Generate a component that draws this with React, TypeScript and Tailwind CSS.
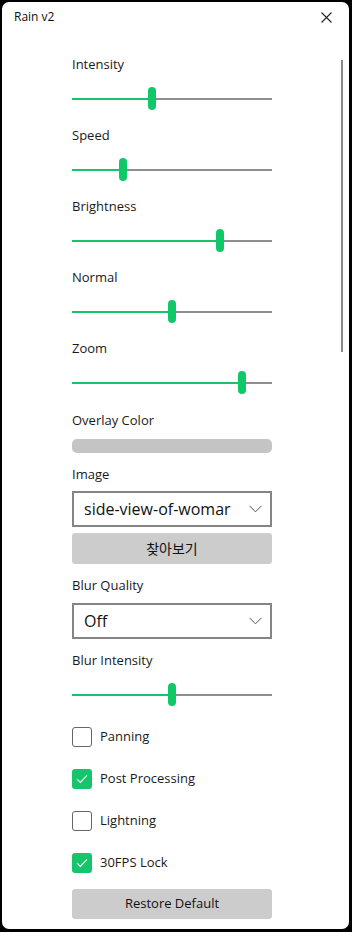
import React from "react";

const font = { fontFamily: '"Open Sans", "Noto Sans CJK KR", sans-serif' };

function Label({ text, className = "" }: { text: string; className?: string }) {
  return (
    <div className={"h-5 leading-5 text-[13px] text-[#1a1a1a] " + className}>{text}</div>
  );
}

function Slider({ pos, className = "" }: { pos: number; className?: string }) {
  return (
    <div className={"relative h-6 w-[200px] " + className}>
      <div className="absolute left-0 right-0 top-[11px] h-[2px] bg-[#8e8e8e]" />
      <div className="absolute left-0 top-[11px] h-[2px] bg-[#19c36c]" style={{ width: pos }} />
      <div
        className="absolute top-0 h-[23px] w-2 rounded-full bg-[#10c868]"
        style={{ left: pos - 4 }}
      />
    </div>
  );
}

function Chevron() {
  return (
    <svg width="13" height="8" viewBox="0 0 13 8" className="shrink-0">
      <path d="M0.5 0.8 L6.5 6.8 L12.5 0.8" fill="none" stroke="#555" strokeWidth="1" />
    </svg>
  );
}

function Select({ value, className = "" }: { value: string; className?: string }) {
  return (
    <div
      className={
        "flex h-9 w-[200px] items-center border-2 border-[#858585] bg-white pl-[10px] pr-[8px] " +
        className
      }
    >
      <div className="flex-1 overflow-hidden whitespace-nowrap text-[16px] text-[#111]">{value}</div>
      <Chevron />
    </div>
  );
}

function Checkbox({ checked, label, className = "" }: { checked: boolean; label: string; className?: string }) {
  return (
    <div className={"flex h-5 items-center gap-[8px] " + className}>
      {checked ? (
        <div className="flex h-5 w-5 items-center justify-center rounded-[3px] bg-[#16c46c]">
          <svg width="12" height="10" viewBox="0 0 12 10">
            <path d="M1 5.2 L4.3 8.4 L11 1.4" fill="none" stroke="#fff" strokeWidth="1.1" />
          </svg>
        </div>
      ) : (
        <div className="h-5 w-5 rounded-[3px] border border-[#666] bg-white" />
      )}
      <span className="text-[13px] text-[#1a1a1a]">{label}</span>
    </div>
  );
}

export default function App() {
  return (
    <div className="h-[932px] w-[352px] bg-black pl-[2px] pt-[2px]" style={font}>
      <div className="relative h-[927px] w-[347px] overflow-hidden rounded-[7px] bg-white">
        <div className="flex h-[30px] items-center justify-between pl-[12px] pr-[17px]">
          <span className="text-[12px] text-[#111]">Rain v2</span>
          <svg width="11" height="11" viewBox="0 0 11 11">
            <path d="M0.5 0.5 L10.5 10.5 M10.5 0.5 L0.5 10.5" stroke="#222" strokeWidth="1.1" />
          </svg>
        </div>
        <div className="absolute left-[339px] top-[58px] h-[292px] w-[2px] bg-[#8a8a8a]" />
        <div className="flex flex-col pl-[70px] pt-[22px]">
          <Label text="Intensity" />
          <Slider pos={80} className="mt-[13px]" />
          <Label text="Speed" className="mt-[14px]" />
          <Slider pos={51} className="mt-[13px]" />
          <Label text="Brightness" className="mt-[14px]" />
          <Slider pos={148} className="mt-[13px]" />
          <Label text="Normal" className="mt-[14px]" />
          <Slider pos={100} className="mt-[13px]" />
          <Label text="Zoom" className="mt-[14px]" />
          <Slider pos={170} className="mt-[13px]" />
          <Label text="Overlay Color" className="mt-[15px]" />
          <div className="mt-[9px] h-[14px] w-[200px] rounded-[5px] bg-[#c4c4c4]" />
          <Label text="Image" className="mt-[11px]" />
          <Select value="side-view-of-womar" className="mt-[7px]" />
          <div className="mt-[6px] flex h-[31px] w-[200px] items-center justify-center rounded-[3px] bg-[#cccccc] text-[14px] text-[#111]">
            찾아보기
          </div>
          <Label text="Blur Quality" className="mt-[11px]" />
          <Select value="Off" className="mt-[8px]" />
          <Label text="Blur Intensity" className="mt-[11px]" />
          <Slider pos={100} className="mt-[13px]" />
          <Checkbox checked={false} label="Panning" className="mt-[20px]" />
          <Checkbox checked={true} label="Post Processing" className="mt-[22px]" />
          <Checkbox checked={false} label="Lightning" className="mt-[22px]" />
          <Checkbox checked={true} label="30FPS Lock" className="mt-[22px]" />
          <div className="mt-[16px] flex h-[30px] w-[200px] items-center justify-center rounded-[3px] bg-[#cccccc] text-[13px] text-[#111]">
            Restore Default
          </div>
        </div>
      </div>
    </div>
  );
}
